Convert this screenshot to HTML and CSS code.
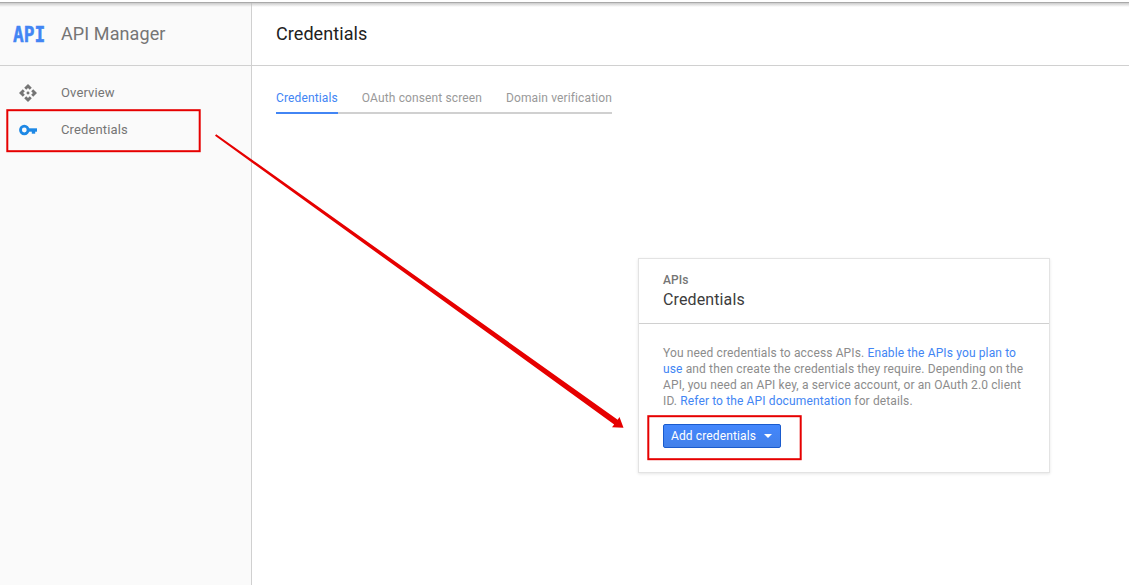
FILE: index.html
```html
<!DOCTYPE html>
<html lang="en">
<head>
<meta charset="utf-8">
<title>API Manager</title>
<link rel="stylesheet" href="styles.css">
</head>
<body>
<div class="app">
  <div class="topbar"></div>
  <aside class="sidebar">
    <div class="brand">
      <svg class="logo" width="36" height="28" viewBox="0 0 36 28"><text transform="translate(1 22) scale(.81 1)">API</text></svg>
      <span class="brand-name">API Manager</span>
    </div>
    <nav class="menu">
      <a class="item">
        <svg class="icon" width="18" height="18" viewBox="1 1 22 22" fill="#757575"><path d="M12 6l2.120 2.120 2.500-2.500L12 1 7.380 5.620l2.500 2.500zM6 12l2.120-2.120-2.500-2.500L1 12l4.620 4.620 2.500-2.500zM18 12l-2.120 2.120 2.500 2.500L23 12l-4.620-4.620-2.500 2.500zM12 18l-2.120-2.120-2.500 2.500L12 23l4.620-4.620-2.500-2.500z"/><circle cx="12" cy="12" r="1.800"/></svg>
        <span>Overview</span>
      </a>
      <a class="item">
        <svg class="icon" width="18" height="18" viewBox="0 0 18 18" fill="none" stroke="#1e88e5"><circle cx="5.300" cy="9" r="3.800" stroke-width="2.800"/><path d="M9 9h9" stroke-width="3.400"/><path d="M14.500 9v3.700" stroke-width="3.400"/></svg>
        <span>Credentials</span>
      </a>
    </nav>
  </aside>
  <main class="main">
    <header class="head"><h1 class="title">Credentials</h1></header>
    <div class="tabs">
      <a class="tab active">Credentials</a>
      <a class="tab">OAuth consent screen</a>
      <a class="tab">Domain verification</a>
    </div>
    <section class="card">
      <div class="card-head">
        <div class="kicker">APIs</div>
        <h2 class="card-title">Credentials</h2>
      </div>
      <div class="card-body">
        <p class="copy"><span class="line">You need credentials to access APIs. <a>Enable the APIs you plan to</a></span> <span class="line"><a>use</a> and then create the credentials they require. Depending on the</span> <span class="line">API, you need an API key, a service account, or an OAuth 2.0 client</span> <span class="line">ID. <a>Refer to the API documentation</a> for details.</span></p>
        <button class="button"><span>Add credentials</span><i class="caret"></i></button>
      </div>
    </section>
  </main>
  <svg class="marks" width="1129" height="585" viewBox="0 0 1129 585">
    <rect x="7.300" y="110.200" width="192.400" height="41"/>
    <rect x="648.300" y="416.200" width="152.400" height="43"/>
    <path d="M215 135.800L216.200 134.200 617.700 419.700 619.500 416.900 623.500 427.800 612 427.200 614.200 424.400z"/>
  </svg>
</div>
</body>
</html>
```
FILE: styles.css
```css
* { box-sizing: border-box; }
body { margin: 0; background: #fff; font-family: Roboto, sans-serif; }
.app { position: relative; display: flex; width: 1129px; height: 585px; overflow: hidden; }
.topbar { position: absolute; top: 0; left: 0; right: 0; height: 7px; background: linear-gradient(#fff 0 2px, #a9a9a9 2px 3px, rgba(190,190,190,.8) 3px, rgba(255,255,255,0) 7px); }
.sidebar { width: 252px; background: #fafafa; border-right: 1px solid #d0d0d0; }
.brand { height: 66px; border-bottom: 1px solid #d0d0d0; padding: 2px 0 0 12px; display: flex; align-items: center; }
.logo { width: 36px; margin-right: 13px; overflow: visible; }
.logo text { font: bold 22px "DejaVu Sans Mono", monospace; fill: #4285f4; stroke: #4285f4; stroke-width: .5px; }
.brand-name { font-size: 18px; letter-spacing: .1px; color: #757575; }
.menu { padding-top: 8px; }
.item { display: flex; align-items: center; height: 37px; padding-left: 19px; font-size: 13px; letter-spacing: .13px; color: #757575; }
.icon { margin-right: 24px; }
.main { flex: 1; min-width: 0; }
.head { height: 66px; border-bottom: 1px solid #d0d0d0; padding: 2px 0 0 24px; display: flex; align-items: center; }
.title { margin: 0; font-size: 18px; font-weight: 400; letter-spacing: .07px; color: #212121; }
.tabs { width: 336px; height: 48px; margin-left: 24px; display: flex; justify-content: space-between; font-size: 12px; letter-spacing: .13px; line-height: 16px; color: #999; border-bottom: 2px solid #d0d0d0; }
.tab { height: 48px; padding-top: 24px; white-space: nowrap; }
.active { width: 62px; color: #4285f4; border-bottom: 2px solid #4285f4; }
.card { width: 412px; height: 215px; margin: 144px 0 0 386px; border: 1px solid #e3e3e3; box-shadow: 0 1px 3px rgba(0,0,0,.1); }
.card-head { height: 65px; padding: 13px 24px 0; border-bottom: 1px solid #d0d0d0; }
.kicker { font-size: 12px; font-weight: 500; line-height: 16px; letter-spacing: .1px; color: #757575; }
.card-title { margin: 2px 0 0; font-size: 16px; font-weight: 400; line-height: 20px; letter-spacing: .12px; color: #3c3c3c; }
.card-body { padding: 21px 24px 0; }
.copy { margin: 0; font-size: 12px; line-height: 16px; letter-spacing: .13px; color: #8c8c8c; }
.copy a { color: #4285f4; }
.line { display: block; white-space: nowrap; }
.button { display: flex; align-items: center; width: 118px; height: 24px; margin-top: 15px; padding: 0 0 0 7px; border: 1px solid #1a5bcd; border-radius: 2px; background: linear-gradient(#4387fd, #4280e9); color: #fff; font: 12px Roboto, sans-serif; letter-spacing: .12px; white-space: nowrap; }
.caret { margin-left: 8px; border: 4px solid transparent; border-top-color: #fff; border-bottom: 0; }
.marks { position: absolute; top: 0; left: 0; pointer-events: none; fill: #e60000; }
.marks rect { fill: none; stroke: #e60000; stroke-width: 2; }
```
